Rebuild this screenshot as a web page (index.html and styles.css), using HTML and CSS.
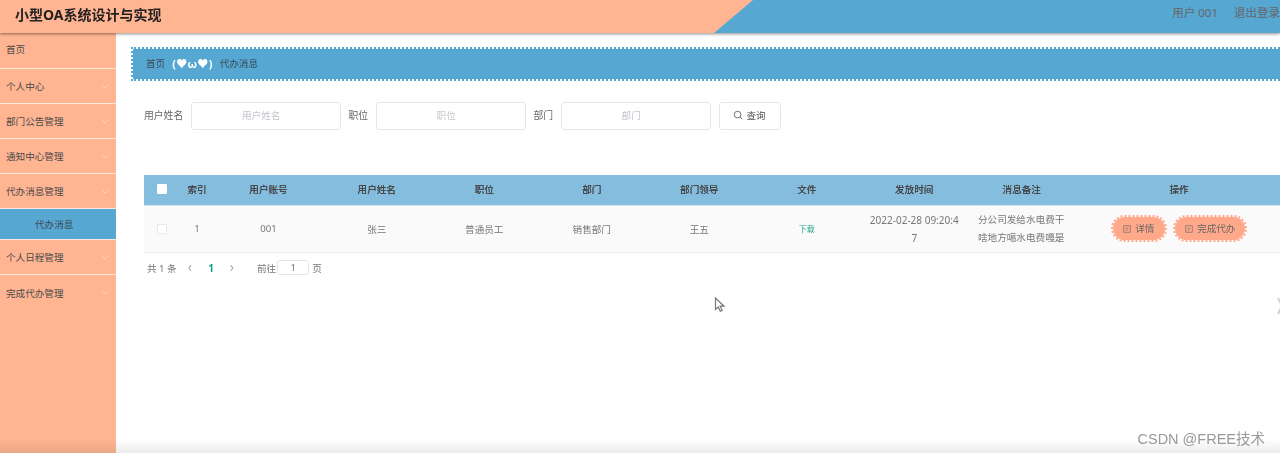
FILE: index.html
```html
<!DOCTYPE html>
<html>

<head>
    <meta charset="UTF-8">
    <title>小型OA系统设计与实现</title>
    <link rel="stylesheet" href="styles.css">
</head>

<body>
    <div class="page">
        <header class="topbar">
            <div class="site-title">小型OA系统设计与实现</div>
            <div class="topbar-right">
                <span>用户 001</span>
                <span>退出登录</span>
            </div>
        </header>

        <div class="layout">
            <!-- Side menu -->
            <ul class="menu">
                <li class="menu-item menu-home">首页</li>
                <li class="menu-item">个人中心
                    <svg class="chevron" viewBox="0 0 10 6"><path d="M1 1l4 4 4-4" /></svg>
                </li>
                <li class="menu-item">部门公告管理
                    <svg class="chevron" viewBox="0 0 10 6"><path d="M1 1l4 4 4-4" /></svg>
                </li>
                <li class="menu-item">通知中心管理
                    <svg class="chevron" viewBox="0 0 10 6"><path d="M1 1l4 4 4-4" /></svg>
                </li>
                <li class="menu-item">代办消息管理
                    <svg class="chevron" viewBox="0 0 10 6"><path d="M1 1l4 4 4-4" /></svg>
                </li>
                <li class="menu-sub">代办消息</li>
                <li class="menu-item">个人日程管理
                    <svg class="chevron" viewBox="0 0 10 6"><path d="M1 1l4 4 4-4" /></svg>
                </li>
                <li class="menu-item menu-last">完成代办管理
                    <svg class="chevron" viewBox="0 0 10 6"><path d="M1 1l4 4 4-4" /></svg>
                </li>
            </ul>

            <main class="content">
                <div class="breadcrumb">
                    <span>首页</span>
                    <span class="kaomoji">(♥ω♥)</span>
                    <span>代办消息</span>
                </div>

                <form class="search-form">
                    <label>用户姓名</label>
                    <input class="search-input" type="text" placeholder="用户姓名">
                    <label>职位</label>
                    <input class="search-input" type="text" placeholder="职位">
                    <label>部门</label>
                    <input class="search-input" type="text" placeholder="部门">
                    <button class="search-button" type="button">
                        <svg class="search-icon" viewBox="0 0 12 12"><circle cx="5.5" cy="5.5" r="4" /><path d="M8.5 8.5l2.5 2.5" /></svg>
                        查询
                    </button>
                </form>

                <table class="data-table">
                    <colgroup>
                        <col class="col-check">
                        <col class="col-index">
                        <col class="col-account">
                        <col class="col-normal">
                        <col class="col-normal">
                        <col class="col-normal">
                        <col class="col-normal">
                        <col class="col-normal">
                        <col class="col-normal">
                        <col class="col-normal">
                        <col class="col-actions">
                    </colgroup>
                    <thead>
                        <tr>
                            <th><span class="checkbox checkbox-head"></span></th>
                            <th>索引</th>
                            <th>用户账号</th>
                            <th>用户姓名</th>
                            <th>职位</th>
                            <th>部门</th>
                            <th>部门领导</th>
                            <th>文件</th>
                            <th>发放时间</th>
                            <th>消息备注</th>
                            <th>操作</th>
                        </tr>
                    </thead>
                    <tbody>
                        <tr>
                            <td><span class="checkbox"></span></td>
                            <td>1</td>
                            <td>001</td>
                            <td>张三</td>
                            <td>普通员工</td>
                            <td>销售部门</td>
                            <td>王五</td>
                            <td><a class="download">下载</a></td>
                            <td class="cell-date">2022-02-28 09:20:47</td>
                            <td class="cell-note">分公司发给水电费干啥地方噶水电费嘎是</td>
                            <td class="cell-actions">
                                <button class="action-button" type="button">
                                    <svg class="doc-icon" viewBox="0 0 10 10"><rect x="1" y="1" width="8" height="8" /><path d="M3 4h4M3 6.500h2.500" /></svg>
                                    详情
                                </button>
                                <button class="action-button" type="button">
                                    <svg class="doc-icon" viewBox="0 0 10 10"><rect x="1" y="1" width="8" height="8" /><path d="M3 4h4M3 6.500h2.500" /></svg>
                                    完成代办
                                </button>
                            </td>
                        </tr>
                    </tbody>
                </table>

                <div class="pager">
                    <span class="pager-total">共 1 条</span>
                    <span class="pager-arrow">‹</span>
                    <span class="pager-current">1</span>
                    <span class="pager-arrow">›</span>
                    <span class="pager-goto">前往</span>
                    <span class="pager-input">1</span>
                    <span>页</span>
                </div>
            </main>
        </div>
    </div>

    <!-- Things captured on top of the page -->
    <svg class="cursor" viewBox="0 0 12 16"><path d="M1.500 1v11.500l2.800-2.500 2 4.300 1.900-.9-2-4.200h3.800z" /></svg>
    <svg class="edge-arrow" viewBox="0 0 6 18"><path d="M1 1l4 8-4 8" /></svg>
    <div class="bottom-fade"></div>
    <div class="watermark">CSDN @FREE技术</div>
</body>

</html>
```

FILE: styles.css
```css
* {
    box-sizing: border-box;
}

html,
body {
    margin: 0;
    height: 453px;
    overflow: hidden;
    background-color: #fff;
}

body {
    font-family: "Noto Sans", "Noto Sans CJK SC", sans-serif;
    font-size: 9.6px;
    color: #555;
}

.page {
    height: 453px;
    filter: blur(0.7px);
}

/* Header */
.topbar {
    height: 33px;
    background-color: #ffb592;
    display: flex;
    justify-content: space-between;
    box-shadow: 0 1px 3px rgba(0, 0, 0, 0.45);
    position: relative;
}

.site-title {
    padding: 4px 0 0 15px;
    font-size: 14px;
    font-weight: 700;
    color: #222;
}

.topbar-right {
    width: 566px;
    background-color: #57a7d3;
    clip-path: polygon(39px 0, 100% 0, 100% 100%, 0 100%);
    display: flex;
    justify-content: flex-end;
    gap: 16px;
    padding-top: 4px;
    font-size: 11.5px;
    color: #666;
    white-space: nowrap;
}

/* Side menu */
.layout {
    display: flex;
    height: 420px;
}

.menu {
    width: 116px;
    flex-shrink: 0;
    margin: 0;
    padding: 0;
    list-style: none;
    background-color: #ffb592;
    color: #4a4a4a;
}

.menu-item {
    height: 35px;
    padding-left: 6px;
    border-bottom: 1.5px solid #ffe9de;
    display: flex;
    align-items: center;
    justify-content: space-between;
}

.menu-home {
    height: 36px;
    padding-bottom: 3px;
}

.menu-last {
    border-bottom: none;
}

.menu-sub {
    height: 31px;
    border-bottom: 1.5px solid #ffe9de;
    padding-left: 35px;
    display: flex;
    align-items: center;
    background-color: #57a7d3;
    color: #3a4a55;
}

.chevron {
    width: 8px;
    height: 5px;
    margin-right: 7px;
    fill: none;
    stroke: #ffd8c4;
    stroke-width: 1;
}

/* Main content */
.content {
    flex: 1;
    min-width: 0;
    padding-top: 14px;
    overflow: hidden;
}

.breadcrumb {
    margin-left: 15px;
    height: 34px;
    padding: 0 0 2px 13px;
    border: 2.5px dotted #57a7d3;
    border-right: none;
    background-color: #57a7d3;
    background-clip: padding-box;
    display: flex;
    align-items: center;
    gap: 7px;
    color: #3a4a55;
}

.kaomoji {
    color: #fff;
    font-weight: 700;
    font-size: 11px;
    letter-spacing: 0.3px;
}

/* Search form */
.search-form {
    margin: 21px 0 0 28px;
    height: 28px;
    display: flex;
    align-items: center;
    color: #666;
}

.search-form label {
    margin-right: 8px;
    padding-bottom: 2px;
    font-size: 9.8px;
}

.search-input {
    width: 150px;
    height: 28px;
    margin-right: 7.4px;
    border: 1px solid #e6e6e6;
    border-radius: 3px;
    text-align: center;
    font-family: inherit;
    font-size: 9.6px;
    outline: none;
    padding: 0 10px 2px 0;
}

.search-input::placeholder {
    color: #c4c6cc;
}

.search-button {
    width: 62px;
    height: 28px;
    padding: 0 0 2px;
    border: 1px solid #e6e6e6;
    border-radius: 3px;
    background-color: #fff;
    font-family: inherit;
    font-size: 9.6px;
    color: #555;
    display: flex;
    align-items: center;
    justify-content: center;
    gap: 3px;
}

.search-icon {
    width: 10px;
    height: 10px;
    fill: none;
    stroke: #555;
    stroke-width: 1;
}

/* Table */
.data-table {
    width: 1138.5px;
    margin: 45px 0 0 28px;
    border-collapse: collapse;
    table-layout: fixed;
}

.col-check {
    width: 36px;
}

.col-index {
    width: 34px;
}

.col-account {
    width: 109px;
}

.col-normal {
    width: 107.5px;
}

.col-actions {
    width: 207px;
}

.data-table th {
    height: 30px;
    padding: 0 0 2px;
    background-color: #84bddd;
    border-bottom: 1px solid #cfe4f0;
    font-weight: 400;
    color: #444;
    text-shadow: 0 0 0.3px #444;
}

.data-table td {
    height: 47px;
    padding: 0;
    background-color: #fafafa;
    border-bottom: 1px solid #edeff3;
    text-align: center;
    color: #777;
}

.checkbox {
    display: block;
    width: 10px;
    height: 10px;
    margin-left: 13px;
    background-color: #fff;
    border: 1px solid #eaeaea;
    border-radius: 1px;
}

.checkbox-head {
    border-color: #fff;
}

.download {
    font-size: 8px;
    color: #2aa88c;
}

.data-table .cell-date {
    padding: 0 8px;
    font-size: 10px;
    line-height: 18px;
    word-break: break-all;
}

.data-table .cell-note {
    padding: 0 10px;
    text-align: left;
    line-height: 18px;
}

.data-table .cell-actions {
    padding-left: 35px;
    text-align: left;
    white-space: nowrap;
}

.action-button {
    height: 27px;
    margin-right: 4px;
    padding: 0 0 2px;
    border: 2.5px dotted #ffa98a;
    border-radius: 14px;
    background-color: #ffa98a;
    background-clip: padding-box;
    font-family: inherit;
    font-size: 9.6px;
    color: #666;
    vertical-align: middle;
}

.action-button:first-child {
    width: 56px;
}

.action-button:last-child {
    width: 74px;
}

.doc-icon {
    width: 8px;
    height: 8px;
    margin-right: 2px;
    fill: none;
    stroke: #666;
    stroke-width: 0.8;
    vertical-align: -1px;
}

/* Pagination */
.pager {
    margin: 7px 0 0 31px;
    height: 16px;
    display: flex;
    align-items: center;
    color: #777;
}

.pager-total {
    width: 38px;
}

.pager-arrow {
    width: 10px;
    color: #aaa;
    font-size: 14px;
    line-height: 14px;
    padding-bottom: 2px;
    text-align: center;
}

.pager-current {
    width: 32px;
    text-align: center;
    font-weight: 700;
    font-size: 10px;
    color: #0f9d8a;
}

.pager-goto {
    margin-left: 20px;
    margin-right: 1px;
}

.pager-input {
    width: 32px;
    height: 15px;
    margin-right: 3px;
    border: 1px solid #e6e6e6;
    border-radius: 3px;
    text-align: center;
    line-height: 13px;
}

/* Overlays */
.cursor {
    position: absolute;
    left: 714px;
    top: 297px;
    width: 12px;
    height: 16px;
    fill: #fff;
    stroke: #777;
    stroke-width: 1.2;
    filter: blur(0.4px);
}

.edge-arrow {
    position: absolute;
    left: 1277px;
    top: 297px;
    width: 6px;
    height: 18px;
    fill: none;
    stroke: #d0d0d0;
    stroke-width: 2;
}

.bottom-fade {
    position: absolute;
    left: 0;
    right: 0;
    bottom: 0;
    height: 14px;
    background: linear-gradient(rgba(0, 0, 0, 0), rgba(0, 0, 0, 0.08));
}

.watermark {
    position: absolute;
    right: 15px;
    top: 427px;
    font-family: "Liberation Sans", "Noto Sans CJK SC", sans-serif;
    font-size: 14.5px;
    color: #999;
}
```
